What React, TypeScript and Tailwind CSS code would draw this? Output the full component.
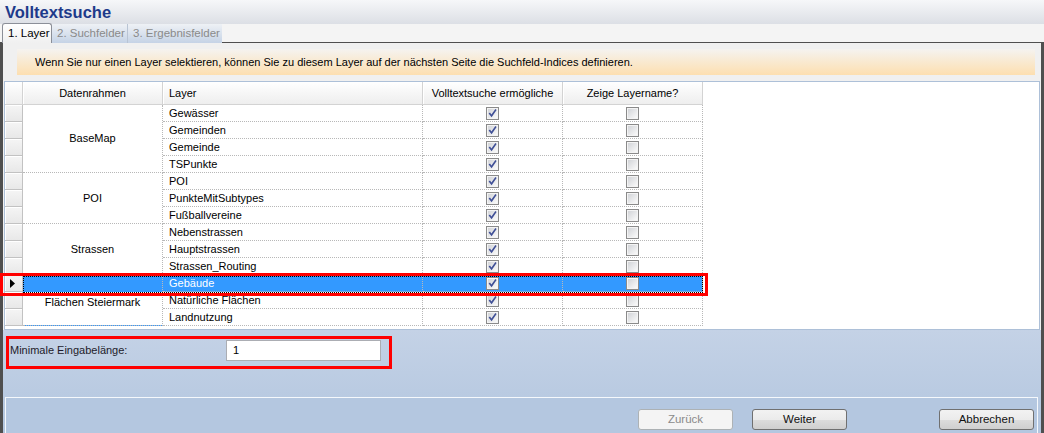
import React from 'react'

interface Row {
  group?: string; span?: number; layer: string; enabled: boolean; showName: boolean; selected?: boolean
}

const rows: Row[] = [
  { group: 'BaseMap', span: 4, layer: 'Gewässer', enabled: true, showName: false },
  { layer: 'Gemeinden', enabled: true, showName: false },
  { layer: 'Gemeinde', enabled: true, showName: false },
  { layer: 'TSPunkte', enabled: true, showName: false },
  { group: 'POI', span: 3, layer: 'POI', enabled: true, showName: false },
  { layer: 'PunkteMitSubtypes', enabled: true, showName: false },
  { layer: 'Fußballvereine', enabled: true, showName: false },
  { group: 'Strassen', span: 3, layer: 'Nebenstrassen', enabled: true, showName: false },
  { layer: 'Hauptstrassen', enabled: true, showName: false },
  { layer: 'Strassen_Routing', enabled: true, showName: false },
  { group: 'Flächen Steiermark', span: 3, layer: 'Gebäude', enabled: true, showName: false, selected: true },
  { layer: 'Natürliche Flächen', enabled: true, showName: false },
  { layer: 'Landnutzung', enabled: true, showName: false },
]

const spanClass: Record<number, string> = { 3: 'row-span-3', 4: 'row-span-4' }

function CheckBox({ checked }: { checked: boolean }) {
  return (
    <svg width="13" height="13" viewBox="0 0 13 13">
      <defs>
        <linearGradient id="cbfill" x1="0" y1="0" x2="1" y2="1">
          <stop offset="0" stopColor="#d2d4d8" />
          <stop offset="1" stopColor="#fafafa" />
        </linearGradient>
      </defs>
      <rect x="0.5" y="0.5" width="12" height="12" fill="#f4f4f4" stroke="#8a8a8a" />
      <rect x="2" y="2" width="9" height="9" fill="url(#cbfill)" />
      {checked && <polygon points="2.6,6.4 4,5.4 5.4,7.4 9.4,2 10.6,3 5.6,10.2" fill="#3f4f96" />}
    </svg>
  )
}

export default function App() {
  const dotB = 'border-b border-dotted border-[#b8b8b8]'
  const dotR = 'border-r border-dotted border-[#b8b8b8]'
  const hdr = 'bg-[linear-gradient(#ffffff,#eeeeee)] border-r border-b border-[#d3d3d3] shadow-[inset_1px_1px_0_#ffffff]'
  const btn = 'w-[95px] h-[21px] rounded-[3px] border border-[#707070] bg-[linear-gradient(#f2f2f2_0%,#ebebeb_50%,#dddddd_50%,#cfcfcf_100%)] text-[11.5px] text-[#111]'

  return (
    <div className="relative w-[1044px] h-[433px] overflow-hidden flex flex-col bg-[#f4f4f4] font-['Liberation_Sans',Arial,sans-serif] text-[11px] text-black">
      {/* Title */}
      <div className="h-[24px] shrink-0 bg-[linear-gradient(#f6f7f9,#dcdfe5)] pl-[5px] flex items-center">
        <span className="text-[16.5px] font-bold text-[#1d3a8a] leading-none">Volltextsuche</span>
      </div>

      {/* Tabs */}
      <div className="h-[19px] shrink-0 flex items-end pl-[2px] relative z-10 -mb-px">
        <div className="h-[20px] w-[50px] border border-b-0 border-[#8b8f98] rounded-t-[3px] bg-[linear-gradient(#ffffff,#f0f0f0)] pl-[5px] leading-[18px] text-[11.5px]">1. Layer</div>
        <div className="h-[19px] w-[76px] bg-[linear-gradient(#eef1f5,#c5d3e6)] border-r border-[#b9c4d4] pl-[5px] leading-[18px] text-[11.5px] text-[#8a8a8a]">2. Suchfelder</div>
        <div className="h-[19px] w-[94px] bg-[linear-gradient(#eef1f5,#c5d3e6)] pl-[5px] leading-[18px] text-[11.5px] text-[#8a8a8a]">3. Ergebnisfelder</div>
      </div>

      {/* Panel */}
      <div className="flex-1 flex flex-col border-t border-l-[3px] border-r-[3px] border-[#4f4f4f] bg-[#f0f0f0]">
        <div className="shrink-0 mt-[6px] ml-[14px] mr-[6px] h-[26px] bg-[linear-gradient(#f5f3f0,#fddfb0)] pl-[18px] flex items-center">
          Wenn Sie nur einen Layer selektieren, können Sie zu diesem Layer auf der nächsten Seite die Suchfeld-Indices definieren.
        </div>

        <div className="shrink-0 mt-[6px] ml-[1px] mr-[1px] h-[249px] bg-white border border-[#adc0d8]">
          <div className="grid grid-cols-[18px_140px_260px_140px_140px] grid-rows-[23px_repeat(13,17px)] w-[698px]">
            <div className={hdr} />
            <div className={`${hdr} flex items-center justify-center`}>Datenrahmen</div>
            <div className={`${hdr} flex items-center pl-[6px]`}>Layer</div>
            <div className={`${hdr} flex items-center justify-center`}>Volltextsuche ermögliche</div>
            <div className={`${hdr} flex items-center justify-center`}>Zeige Layername?</div>

            {rows.map(r => (
              <React.Fragment key={r.layer}>
                <div className="bg-[linear-gradient(#f5f5f5,#e8e8e8)] border-r border-b border-[#c2c2c2] shadow-[inset_1px_1px_0_#ffffff] flex items-center pl-[5px]">
                  {r.selected && (
                    <svg width="5" height="9" viewBox="0 0 5 9"><polygon points="0,0 5,4.5 0,9" fill="#000" /></svg>
                  )}
                </div>
                {r.group && (
                  <div
                    className={`${spanClass[r.span!]} ${dotB} ${dotR} flex items-center justify-center ${r.selected ? 'bg-[linear-gradient(to_bottom,#3399ff_17px,#ffffff_17px)] pt-[17px]' : ''}`}
                  >
                    {r.selected ? <span className="-mt-[13px]">{r.group}</span> : r.group}
                  </div>
                )}
                <div className={`${dotB} ${dotR} pl-[6px] leading-[16px] ${r.selected ? 'bg-[#3399ff] text-white' : ''}`}>{r.layer}</div>
                <div className={`${dotB} ${dotR} flex items-center justify-center ${r.selected ? 'bg-[#3399ff]' : ''}`}>
                  <CheckBox checked={r.enabled} />
                </div>
                <div className={`${dotB} ${dotR} flex items-center justify-center ${r.selected ? 'bg-[#3399ff]' : ''}`}>
                  <CheckBox checked={r.showName} />
                </div>
              </React.Fragment>
            ))}
          </div>
        </div>

        {/* Bottom area */}
        <div className="flex-1 flex flex-col bg-[linear-gradient(#c4d2e6,#b3c6df)] pt-[6px]">
          <div className="shrink-0 ml-[3px] w-[386px] h-[33px] border-[3px] border-[#ff0000] flex items-start pt-[1px]">
            <div className="w-[217px] pl-[1px] leading-[21px] text-[#1e1b2a]">Minimale Eingabelänge:</div>
            <div className="w-[155px] h-[21px] bg-white border border-[#abadb3] pl-[6px] leading-[19px]">1</div>
          </div>

          <div className="flex-1 mt-[28px] ml-[2px] mr-[3px] border-t border-l border-r border-[#f5f8fc] bg-[#b4c7e0] flex justify-end items-start pt-[11px] pr-[3px]">
            <button className="w-[95px] h-[21px] rounded-[3px] border border-[#adb2b5] bg-[#f4f4f4] text-[#8a8a8a] text-[11.5px]">Zurück</button>
            <button className={`ml-[19px] ${btn}`}>Weiter</button>
            <button className={`ml-[92px] ${btn}`}>Abbrechen</button>
          </div>
        </div>
      </div>

      {/* Annotation overlays */}
      <div className="absolute left-[23px] top-[276px] w-[680px] h-[17px] border border-dotted border-black pointer-events-none" />
      <div className="absolute left-0 top-[273px] w-[708px] h-[23px] border-[3px] border-[#ff0000] pointer-events-none" />
    </div>
  )
}
